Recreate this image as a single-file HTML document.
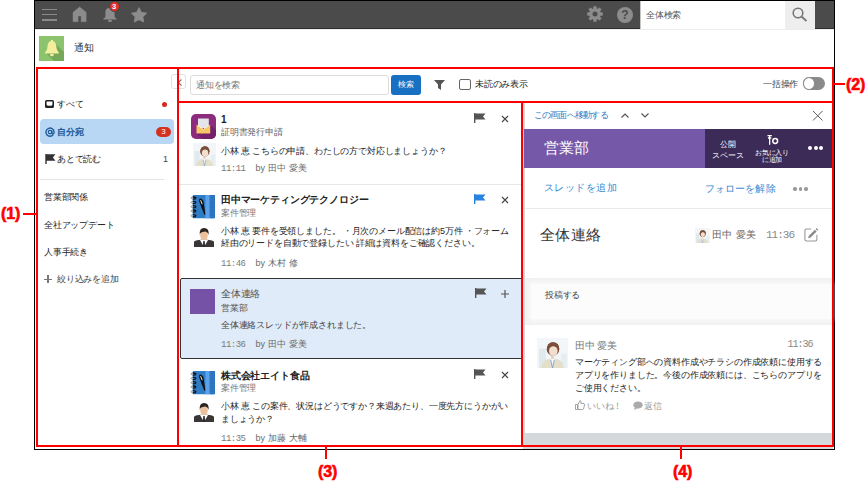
<!DOCTYPE html>
<html><head><meta charset="utf-8">
<style>
*{box-sizing:border-box}
html,body{margin:0;padding:0;width:867px;height:484px;overflow:hidden;background:#fff;font-family:"Liberation Sans",sans-serif;color:#333}
.a{position:absolute}
.t{position:absolute;white-space:nowrap;line-height:12px;font-size:9px;letter-spacing:-0.17px}
.tm{font-family:"Liberation Mono",monospace;font-size:9px;letter-spacing:-0.5px;margin-right:10px;color:#7a7a7a}
.tt{letter-spacing:0.1px}
.r{position:absolute;background:#ff0000}
svg{position:absolute;overflow:visible}
</style></head><body>

<!-- outer frame -->
<div class="a" style="left:34px;top:0;width:801px;height:450px;border:1px solid #000"></div>
<!-- top bar -->
<div class="a" style="left:35px;top:1px;width:799px;height:28px;background:#4b4b4b"></div>
<div class="a" style="left:35px;top:28px;width:799px;height:1px;background:#2f2f2f"></div>
<div class="a" style="left:35px;top:29px;width:799px;height:1px;background:#ececec"></div>

<!-- hamburger -->
<div class="a" style="left:42px;top:8.6px;width:14.5px;height:1.6px;background:#8a8a8a"></div>
<div class="a" style="left:42px;top:13.8px;width:14.5px;height:1.6px;background:#8a8a8a"></div>
<div class="a" style="left:42px;top:19px;width:14.5px;height:1.6px;background:#8a8a8a"></div>
<!-- home -->
<svg style="left:72.7px;top:6.8px" width="13.2" height="15" viewBox="0 0 13.2 15"><path d="M6.6 0 L13.2 5.3 V14.8 H8.1 V9.1 H5.1 V14.8 H0 V5.3Z" fill="#8c8c8c" stroke="#8c8c8c" stroke-width="0.4" stroke-linejoin="round"/></svg>
<!-- bell -->
<svg style="left:102.5px;top:7px" width="14" height="15" viewBox="0 0 14 15"><path d="M7 0.8 C3.2 0.8 2.4 3.2 2.4 6.2 V9.2 Q2.3 10.8 0.3 11.8 V12.6 H13.7 V11.8 Q11.7 10.8 11.6 9.2 V6.2 C11.6 3.2 10.8 0.8 7 0.8Z" fill="#8c8c8c"/><ellipse cx="7" cy="13.9" rx="2" ry="1.1" fill="#8c8c8c"/></svg>
<div class="a" style="left:108.5px;top:0.8px;width:11px;height:11px;border-radius:50%;background:#e0302a;border:0.8px solid #3d4545;color:#fff;font-size:7.5px;line-height:9.5px;text-align:center;font-weight:bold">3</div>
<!-- star -->
<svg style="left:131px;top:6.5px" width="16" height="16" viewBox="0 0 16 16"><path d="M8.00 0.60 L10.41 5.28 L15.61 6.13 L11.90 9.87 L12.70 15.07 L8.00 12.70 L3.30 15.07 L4.10 9.87 L0.39 6.13 L5.59 5.28Z" fill="#8c8c8c" stroke="#8c8c8c" stroke-width="0.8" stroke-linejoin="round"/></svg>
<!-- gear -->
<svg style="left:587.2px;top:6.3px" width="16" height="16" viewBox="-8 -8 16 16"><g fill="#8c8c8c" stroke="#8c8c8c" stroke-width="0.5" stroke-linejoin="round"><circle r="5.4"/><path d="M-1.3 -7.6 H1.3 L1.7 -4 H-1.7Z" transform="rotate(0)"/><path d="M-1.3 -7.6 H1.3 L1.7 -4 H-1.7Z" transform="rotate(45)"/><path d="M-1.3 -7.6 H1.3 L1.7 -4 H-1.7Z" transform="rotate(90)"/><path d="M-1.3 -7.6 H1.3 L1.7 -4 H-1.7Z" transform="rotate(135)"/><path d="M-1.3 -7.6 H1.3 L1.7 -4 H-1.7Z" transform="rotate(180)"/><path d="M-1.3 -7.6 H1.3 L1.7 -4 H-1.7Z" transform="rotate(225)"/><path d="M-1.3 -7.6 H1.3 L1.7 -4 H-1.7Z" transform="rotate(270)"/><path d="M-1.3 -7.6 H1.3 L1.7 -4 H-1.7Z" transform="rotate(315)"/></g><circle r="2.5" fill="#4b4b4b"/></svg>
<!-- help -->
<div class="a" style="left:617px;top:6.5px;width:16px;height:16px;border-radius:50%;background:#8c8c8c;color:#4b4b4b;font-size:12px;line-height:16px;text-align:center;font-weight:bold">?</div>
<!-- global search -->
<div class="a" style="left:640px;top:1px;width:145px;height:28px;background:#fff;border-left:1px solid #c4c4c4"></div>
<div class="t" style="left:646px;top:8.5px;color:#555">全体検索</div>
<div class="a" style="left:785px;top:1px;width:30px;height:28px;background:#eeeeee"></div>
<svg style="left:792px;top:7px" width="16" height="15" viewBox="0 0 16 15"><circle cx="6" cy="6" r="4.8" fill="none" stroke="#777" stroke-width="1.6"/><line x1="9.5" y1="9.5" x2="14.5" y2="14" stroke="#777" stroke-width="1.8"/></svg>

<!-- header -->
<div class="a" style="left:39px;top:36px;width:25px;height:25px;background:#8cc46e;overflow:hidden">
  <svg style="left:0;top:0" width="25" height="25" viewBox="0 0 25 25"><path d="M14 5 L25 16 V25 H15 L7 17 H19.8Z" fill="#76a85c"/><path d="M12.9 3.8 Q14 3.8 14 5.1 Q17.4 6.4 17.4 11.2 Q17.4 15 19.8 16.4 V17.4 H6 V16.4 Q8.4 15 8.4 11.2 Q8.4 6.4 11.8 5.1 Q11.8 3.8 12.9 3.8Z" fill="#f3ee9d"/><ellipse cx="12.9" cy="19" rx="1.9" ry="1.3" fill="#f3ee9d"/></svg>
</div>
<div class="t" style="left:74px;top:42px;font-size:10px;color:#333">通知</div>

<!-- ===== LEFT SIDEBAR ===== -->
<div class="a" style="left:171px;top:74px;width:15px;height:15px;border:1px solid #e2e2e2;border-radius:3px;background:#fff"></div>
<svg style="left:177px;top:79px" width="5" height="7" viewBox="0 0 5 7"><path d="M4.5 0.5 L1.2 3.5 L4.5 6.5" fill="none" stroke="#777" stroke-width="1.1"/></svg>

<!-- inbox icon -->
<svg style="left:45px;top:100px" width="9" height="8" viewBox="0 0 8.7 7.6"><path fill-rule="evenodd" d="M1.5 0 H7.2 Q8.7 0 8.7 1.5 V6.1 Q8.7 7.6 7.2 7.6 H1.5 Q0 7.6 0 6.1 V1.5 Q0 0 1.5 0Z M1.5 1.5 V4.3 Q1.8 5.6 3 5.6 H5.7 Q6.9 5.6 7.2 4.3 V1.5Z" fill="#222"/></svg>
<div class="t" style="left:57px;top:98px;font-size:8.8px;color:#222">すべて</div>
<div class="a" style="left:162px;top:102px;width:5px;height:5px;border-radius:50%;background:#d62a1e"></div>

<div class="a" style="left:40px;top:119px;width:134px;height:25px;background:#b8d7f4;border-radius:4px"></div>
<svg style="left:44.5px;top:127px" width="10" height="10" viewBox="0 0 10 10"><path d="M8.3 7.6 A4.1 4.1 0 1 1 9.1 5 V5.6 Q9.1 6.9 7.9 6.9 Q6.8 6.9 6.8 5.6 V3.4" fill="none" stroke="#1d5a98" stroke-width="1.35"/><circle cx="5" cy="5" r="1.75" fill="none" stroke="#1d5a98" stroke-width="1.25"/></svg>
<div class="t" style="left:57px;top:126px;font-size:8.8px;color:#1a5796;font-weight:bold">自分宛</div>
<div class="a" style="left:156px;top:127px;width:15px;height:10px;border-radius:5px;background:#d3321f;color:#fff;font-size:8px;line-height:10px;text-align:center">3</div>

<svg style="left:45px;top:154px" width="10" height="10" viewBox="0 0 10 10"><path d="M1 0 V10 M1 1 H9 L7 3.5 L9 6 H1" fill="#333" stroke="#333" stroke-width="1.4"/></svg>
<div class="t" style="left:57px;top:153px;font-size:8.8px;color:#222">あとで読む</div>
<div class="t" style="left:163px;top:153px;font-size:9px;color:#444">1</div>

<div class="a" style="left:40px;top:179px;width:124px;height:1px;background:#e4e4e4"></div>
<div class="t" style="left:44px;top:191px;color:#222">営業部関係</div>
<div class="t" style="left:44px;top:219px;color:#222">全社アップデート</div>
<div class="t" style="left:44px;top:246px;color:#222">人事手続き</div>
<div class="a" style="left:44px;top:278.5px;width:8px;height:1.2px;background:#777"></div>
<div class="a" style="left:47.4px;top:275px;width:1.2px;height:8px;background:#777"></div>
<div class="t" style="left:57px;top:273px;color:#444">絞り込みを追加</div>

<!-- ===== TOOLBAR ===== -->
<div class="a" style="left:190px;top:75px;width:199px;height:20px;border:1px solid #dcdcdc;border-radius:3px;background:#fff"></div>
<div class="t" style="left:196px;top:79px;color:#777">通知を検索</div>
<div class="a" style="left:391px;top:75px;width:30px;height:20px;border-radius:3px;background:#1770c2;color:#fff;font-size:7.5px;line-height:20px;text-align:center">検索</div>
<svg style="left:434px;top:80px" width="11" height="10" viewBox="0 0 11 10"><path d="M0 0 H11 L7 4.5 V10 L4 8 V4.5Z" fill="#555"/></svg>
<div class="a" style="left:459px;top:79px;width:12px;height:11px;border:1.3px solid #666;border-radius:2px;background:#fff"></div>
<div class="t" style="left:475px;top:78px;color:#222">未読のみ表示</div>
<div class="t" style="left:763px;top:78px;color:#444">一括操作</div>
<div class="a" style="left:802.5px;top:77px;width:22.5px;height:13px;border-radius:6.5px;background:#8a8a8a"></div>
<div class="a" style="left:802.5px;top:77px;width:12.5px;height:13px;border-radius:50%;background:#fff;border:1.2px solid #8a8a8a"></div>

<!-- ===== LIST ===== -->
<!-- item1 -->
<div class="a" style="left:190.5px;top:113.5px;width:25px;height:25px;border-radius:5px;background:#8d2b7e;overflow:hidden">
  <svg style="left:0;top:0" width="25" height="25" viewBox="0 0 25 25"><path d="M19.2 10.5 L35 26 L24 37 L5.5 19.5 Z" fill="#74206a"/><rect x="7" y="4.5" width="10.8" height="9.5" fill="#e3e5ea"/><path d="M5.5 10.5 L12.35 15.3 L19.2 10.5 V19.5 H5.5Z" fill="#f7c766"/><path d="M7 11.5 L12.35 15.3 L17.7 11.5" fill="none" stroke="#fff" stroke-width="0.7"/></svg>
</div>
<div class="t" style="left:221px;top:114px;font-size:10px;font-weight:bold;color:#222">1</div>
<div class="t" style="left:221px;top:126px;color:#666">証明書発行申請</div>
<svg style="left:193px;top:143px" width="23" height="23" viewBox="0 0 31 31"><path d="M0 0H31V31H0Z" fill="#f2f6f8"/><rect x="2" y="11" width="7" height="20" fill="#e0e9ee"/><rect x="24" y="16" width="6" height="15" fill="#e6eef2"/><path d="M4 31 Q5 23 12 21.5 H19 Q26 23 27 31Z" fill="#e4dfc8"/><path d="M12.5 21.5 L15.5 31 L18.5 21.5Z" fill="#f5f7f9"/><path d="M13.6 22.5 L15.5 31 L17.4 22.5" fill="none" stroke="#7d9cc2" stroke-width="0.9"/><rect x="14" y="17.5" width="3" height="4" fill="#ecd0bc"/><ellipse cx="16" cy="11.3" rx="6.3" ry="6.9" fill="#7a4e3a"/><ellipse cx="16.3" cy="13.4" rx="4.3" ry="5.1" fill="#f3ddcd"/><path d="M9.8 13 Q10 4.5 16 4.5 Q22.2 4.5 22.3 12 Q20 8 15 8.6 Q12 9.4 9.8 13Z" fill="#7a4e3a"/></svg>
<div class="t" style="left:221px;top:145px;color:#1e1e1e">小林 恵 こちらの申請、わたしの方で対応しましょうか？</div>
<div class="t tt" style="left:221px;top:162px;color:#6a6a6a"><span class="tm">11:11</span>by 田中 愛美</div>
<svg style="left:474px;top:113px" width="12" height="10" viewBox="0 0 12 10"><path d="M0.7 0 V10" stroke="#555" stroke-width="1.4"/><path d="M0.7 0.5 H11.5 L9 3.5 L11.5 6.5 H0.7Z" fill="#555"/></svg>
<svg style="left:502px;top:115.5px" width="6" height="6" viewBox="0 0 6 6"><path d="M0 0 L6 6 M6 0 L0 6" stroke="#444" stroke-width="1.1"/></svg>
<div class="a" style="left:179px;top:184px;width:342px;height:1px;background:#e6e6e6"></div>

<!-- item2 -->
<div class="a" style="left:190px;top:194px;width:26px;height:25px;overflow:hidden">
  <svg style="left:0;top:0" width="26" height="25" viewBox="0 0 26 25"><rect x="2.6" y="1" width="22.4" height="23.3" rx="1" fill="#2f7cc6"/><rect x="15.4" y="1" width="4.3" height="23.3" fill="#5aa2ee"/><rect x="19.7" y="1" width="5.3" height="23.3" rx="0.8" fill="#2b72bc"/><path d="M20.8 2 V23.5 M23.3 2 V23.5" stroke="#4a90dc" stroke-width="0.5" stroke-dasharray="1 1"/><path d="M9.8 4.4 Q12.6 4.2 13.6 8 L15.4 20.4 L14.2 20.8 L9.2 7.4 Q8.8 5 9.8 4.4Z" fill="#111"/><path d="M10.6 6.2 L12.2 10.2" stroke="#fff" stroke-width="0.9"/><path d="M3.5 2.9999999999999996 Q0.6 2.9999999999999996 0.9 4.1 Q1.2 5.199999999999999 3.5 5.199999999999999" fill="none" stroke="#888" stroke-width="0.9"/><path d="M3 2.9999999999999996 Q5.8 3.1999999999999997 5.8 4.1 Q5.6 5.199999999999999 3 5.199999999999999" fill="none" stroke="#111" stroke-width="1.3"/><path d="M3.5 7.4 Q0.6 7.4 0.9 8.5 Q1.2 9.6 3.5 9.6" fill="none" stroke="#888" stroke-width="0.9"/><path d="M3 7.4 Q5.8 7.6 5.8 8.5 Q5.6 9.6 3 9.6" fill="none" stroke="#111" stroke-width="1.3"/><path d="M3.5 11.700000000000001 Q0.6 11.700000000000001 0.9 12.8 Q1.2 13.9 3.5 13.9" fill="none" stroke="#888" stroke-width="0.9"/><path d="M3 11.700000000000001 Q5.8 11.9 5.8 12.8 Q5.6 13.9 3 13.9" fill="none" stroke="#111" stroke-width="1.3"/><path d="M3.5 16.0 Q0.6 16.0 0.9 17.1 Q1.2 18.200000000000003 3.5 18.200000000000003" fill="none" stroke="#888" stroke-width="0.9"/><path d="M3 16.0 Q5.8 16.200000000000003 5.8 17.1 Q5.6 18.200000000000003 3 18.200000000000003" fill="none" stroke="#111" stroke-width="1.3"/><path d="M3.5 20.7 Q0.6 20.7 0.9 21.8 Q1.2 22.900000000000002 3.5 22.900000000000002" fill="none" stroke="#888" stroke-width="0.9"/><path d="M3 20.7 Q5.8 20.900000000000002 5.8 21.8 Q5.6 22.900000000000002 3 22.900000000000002" fill="none" stroke="#111" stroke-width="1.3"/></svg>
</div>
<div class="t" style="left:221px;top:194px;font-size:10px;font-weight:bold;color:#222">田中マーケティングテクノロジー</div>
<div class="t" style="left:221px;top:206.5px;color:#777">案件管理</div>
<div class="a" style="left:193px;top:227px;width:22px;height:20px;overflow:hidden">
  <svg style="left:0;top:0" width="22" height="20" viewBox="0 0 22 20"><path d="M1 20 V15 Q1 13.6 4 13.2 L8 12.7 H14 L18 13.2 Q21 13.6 21 15 V20Z" fill="#3a3636"/><path d="M7 13 L11 20 L15 13Z" fill="#fff"/><path d="M10.3 14 H11.7 L12.2 20 H9.8Z" fill="#2c2c34"/><ellipse cx="11" cy="8.5" rx="3.8" ry="4.8" fill="#edc09c"/><path d="M6.8 8 Q6 1 11 1 Q16.5 1 15.5 8 Q15 5 12.5 4.5 Q9 4.5 7.5 6Z" fill="#2a2522"/></svg>
</div>
<div class="t" style="left:221px;top:225px;color:#1e1e1e">小林 恵 要件を受領しました。 ・月次のメール配信は約5万件 ・フォーム</div>
<div class="t" style="left:221px;top:237px;color:#1e1e1e">経由のリードを自動で登録したい 詳細は資料をご確認ください。</div>
<div class="t tt" style="left:221px;top:256.5px;color:#6a6a6a"><span class="tm">11:46</span>by 木村 修</div>
<svg style="left:474px;top:194px" width="12" height="10" viewBox="0 0 12 10"><path d="M0.7 0 V10" stroke="#2b83e0" stroke-width="1.4"/><path d="M0.7 0.5 H11.5 L9 3.5 L11.5 6.5 H0.7Z" fill="#2b83e0"/></svg>
<svg style="left:502px;top:196.5px" width="6" height="6" viewBox="0 0 6 6"><path d="M0 0 L6 6 M6 0 L0 6" stroke="#444" stroke-width="1.1"/></svg>

<!-- item3 selected -->
<div class="a" style="left:180px;top:278px;width:344px;height:81px;border:1px solid #333;border-radius:2px;background:#dfebf8"></div>
<div class="a" style="left:190px;top:289px;width:25px;height:25px;background:#7552a6"></div>
<div class="t" style="left:221px;top:287.5px;font-size:10px;color:#555">全体連絡</div>
<div class="t" style="left:221px;top:302px;color:#555">営業部</div>
<div class="t" style="left:221px;top:319px;color:#444">全体連絡スレッドが作成されました。</div>
<div class="t tt" style="left:221px;top:337.5px;color:#6a6a6a"><span class="tm">11:36</span>by 田中 愛美</div>
<svg style="left:475px;top:288px" width="12" height="10" viewBox="0 0 12 10"><path d="M0.7 0 V10" stroke="#555" stroke-width="1.4"/><path d="M0.7 0.5 H11.5 L9 3.5 L11.5 6.5 H0.7Z" fill="#555"/></svg>
<svg style="left:501px;top:289.5px" width="8" height="8" viewBox="0 0 8 8"><path d="M4 0 V8 M0 4 H8" stroke="#555" stroke-width="1.2"/></svg>

<!-- item4 -->
<div class="a" style="left:190px;top:370px;width:26px;height:25px;overflow:hidden">
  <svg style="left:0;top:0" width="26" height="25" viewBox="0 0 26 25"><rect x="2.6" y="1" width="22.4" height="23.3" rx="1" fill="#2f7cc6"/><rect x="15.4" y="1" width="4.3" height="23.3" fill="#5aa2ee"/><rect x="19.7" y="1" width="5.3" height="23.3" rx="0.8" fill="#2b72bc"/><path d="M20.8 2 V23.5 M23.3 2 V23.5" stroke="#4a90dc" stroke-width="0.5" stroke-dasharray="1 1"/><path d="M9.8 4.4 Q12.6 4.2 13.6 8 L15.4 20.4 L14.2 20.8 L9.2 7.4 Q8.8 5 9.8 4.4Z" fill="#111"/><path d="M10.6 6.2 L12.2 10.2" stroke="#fff" stroke-width="0.9"/><path d="M3.5 2.9999999999999996 Q0.6 2.9999999999999996 0.9 4.1 Q1.2 5.199999999999999 3.5 5.199999999999999" fill="none" stroke="#888" stroke-width="0.9"/><path d="M3 2.9999999999999996 Q5.8 3.1999999999999997 5.8 4.1 Q5.6 5.199999999999999 3 5.199999999999999" fill="none" stroke="#111" stroke-width="1.3"/><path d="M3.5 7.4 Q0.6 7.4 0.9 8.5 Q1.2 9.6 3.5 9.6" fill="none" stroke="#888" stroke-width="0.9"/><path d="M3 7.4 Q5.8 7.6 5.8 8.5 Q5.6 9.6 3 9.6" fill="none" stroke="#111" stroke-width="1.3"/><path d="M3.5 11.700000000000001 Q0.6 11.700000000000001 0.9 12.8 Q1.2 13.9 3.5 13.9" fill="none" stroke="#888" stroke-width="0.9"/><path d="M3 11.700000000000001 Q5.8 11.9 5.8 12.8 Q5.6 13.9 3 13.9" fill="none" stroke="#111" stroke-width="1.3"/><path d="M3.5 16.0 Q0.6 16.0 0.9 17.1 Q1.2 18.200000000000003 3.5 18.200000000000003" fill="none" stroke="#888" stroke-width="0.9"/><path d="M3 16.0 Q5.8 16.200000000000003 5.8 17.1 Q5.6 18.200000000000003 3 18.200000000000003" fill="none" stroke="#111" stroke-width="1.3"/><path d="M3.5 20.7 Q0.6 20.7 0.9 21.8 Q1.2 22.900000000000002 3.5 22.900000000000002" fill="none" stroke="#888" stroke-width="0.9"/><path d="M3 20.7 Q5.8 20.900000000000002 5.8 21.8 Q5.6 22.900000000000002 3 22.900000000000002" fill="none" stroke="#111" stroke-width="1.3"/></svg>
</div>
<div class="t" style="left:221px;top:370px;font-size:10px;font-weight:bold;color:#222">株式会社エイト食品</div>
<div class="t" style="left:221px;top:382px;color:#777">案件管理</div>
<div class="a" style="left:193px;top:402px;width:22px;height:20px;overflow:hidden">
  <svg style="left:0;top:0" width="22" height="20" viewBox="0 0 22 20"><path d="M1 20 V15 Q1 13.6 4 13.2 L8 12.7 H14 L18 13.2 Q21 13.6 21 15 V20Z" fill="#3a3636"/><path d="M7 13 L11 20 L15 13Z" fill="#fff"/><path d="M10.3 14 H11.7 L12.2 20 H9.8Z" fill="#2c2c34"/><ellipse cx="11" cy="8.5" rx="3.8" ry="4.8" fill="#edc09c"/><path d="M6.8 8 Q6 1 11 1 Q16.5 1 15.5 8 Q15 5 12.5 4.5 Q9 4.5 7.5 6Z" fill="#2a2522"/></svg>
</div>
<div class="t" style="left:221px;top:400px;color:#1e1e1e">小林 恵 この案件、状況はどうですか？来週あたり、一度先方にうかがい</div>
<div class="t" style="left:221px;top:413px;color:#1e1e1e">ましょうか？</div>
<div class="t tt" style="left:221px;top:431.5px;color:#6a6a6a"><span class="tm">11:35</span>by 加藤 大輔</div>
<svg style="left:474px;top:369px" width="12" height="10" viewBox="0 0 12 10"><path d="M0.7 0 V10" stroke="#555" stroke-width="1.4"/><path d="M0.7 0.5 H11.5 L9 3.5 L11.5 6.5 H0.7Z" fill="#555"/></svg>
<svg style="left:502px;top:371.5px" width="6" height="6" viewBox="0 0 6 6"><path d="M0 0 L6 6 M6 0 L0 6" stroke="#444" stroke-width="1.1"/></svg>

<!-- ===== RIGHT PANEL ===== -->
<div class="a" style="left:523px;top:103px;width:310px;height:346px;background:#d4d8da"></div>
<div class="a" style="left:525px;top:103px;width:308px;height:26px;background:#fff"></div>
<div class="t" style="left:533.5px;top:109px;letter-spacing:-0.75px;color:#2a7cc6">この画面へ移動する</div>
<svg style="left:621px;top:112.5px" width="8" height="5" viewBox="0 0 8 5"><path d="M0.5 4.5 L4 1 L7.5 4.5" fill="none" stroke="#555" stroke-width="1.2"/></svg>
<svg style="left:641px;top:112.5px" width="8" height="5" viewBox="0 0 8 5"><path d="M0.5 0.5 L4 4 L7.5 0.5" fill="none" stroke="#555" stroke-width="1.2"/></svg>
<svg style="left:812.5px;top:111px" width="9.5" height="9.5" viewBox="0 0 10 10"><path d="M0 0 L10 10 M10 0 L0 10" stroke="#555" stroke-width="1"/></svg>

<div class="a" style="left:524px;top:129px;width:309px;height:39px;background:#7658a8"></div>
<div class="a" style="left:705px;top:129px;width:128px;height:39px;background:#3d2b57"></div>
<div class="t" style="left:544px;top:139px;font-size:15px;line-height:18px;color:#fff">営業部</div>
<div class="t" style="left:708px;top:139px;width:40px;text-align:center;font-size:7.5px;line-height:11px;color:#fff">公開<br>スペース</div>
<svg style="left:767px;top:135px" width="12" height="10" viewBox="0 0 12 10"><path d="M0.5 0.7 H4.8 M1 3 H4.3 M2.65 0.7 V9.8" stroke="#fff" stroke-width="1.3"/><circle cx="8.2" cy="6" r="2.4" fill="none" stroke="#fff" stroke-width="1.5"/></svg>
<div class="t" style="left:752px;top:148.5px;width:40px;text-align:center;font-size:7px;line-height:7.5px;letter-spacing:-0.1px;color:#fff">お気に入り<br>に追加</div>
<div class="a" style="left:808px;top:146px;width:4px;height:4px;border-radius:50%;background:#fff"></div>
<div class="a" style="left:813.5px;top:146px;width:4px;height:4px;border-radius:50%;background:#fff"></div>
<div class="a" style="left:819px;top:146px;width:4px;height:4px;border-radius:50%;background:#fff"></div>

<div class="a" style="left:525px;top:168px;width:308px;height:40px;background:#fff"></div>
<div class="t" style="left:543.5px;top:182px;font-size:10px;letter-spacing:0.5px;color:#3a8bd2">スレッドを追加</div>
<div class="t" style="left:705px;top:182.5px;font-size:10px;letter-spacing:0.1px;color:#3a8bd2">フォローを解除</div>
<div class="a" style="left:793px;top:187px;width:3.5px;height:3.5px;border-radius:50%;background:#999"></div>
<div class="a" style="left:798.5px;top:187px;width:3.5px;height:3.5px;border-radius:50%;background:#999"></div>
<div class="a" style="left:804px;top:187px;width:3.5px;height:3.5px;border-radius:50%;background:#999"></div>
<div class="a" style="left:525px;top:208px;width:308px;height:1px;background:#e8ecef"></div>

<div class="a" style="left:525px;top:209px;width:308px;height:69px;background:#fff"></div>
<div class="t" style="left:539.5px;top:226px;font-size:15px;line-height:18px;letter-spacing:0.6px;color:#333">全体連絡</div>
<svg style="left:695px;top:228px" width="15" height="15" viewBox="0 0 31 31"><path d="M0 0H31V31H0Z" fill="#f2f6f8"/><rect x="2" y="11" width="7" height="20" fill="#e0e9ee"/><rect x="24" y="16" width="6" height="15" fill="#e6eef2"/><path d="M4 31 Q5 23 12 21.5 H19 Q26 23 27 31Z" fill="#e4dfc8"/><path d="M12.5 21.5 L15.5 31 L18.5 21.5Z" fill="#f5f7f9"/><path d="M13.6 22.5 L15.5 31 L17.4 22.5" fill="none" stroke="#7d9cc2" stroke-width="0.9"/><rect x="14" y="17.5" width="3" height="4" fill="#ecd0bc"/><ellipse cx="16" cy="11.3" rx="6.3" ry="6.9" fill="#7a4e3a"/><ellipse cx="16.3" cy="13.4" rx="4.3" ry="5.1" fill="#f3ddcd"/><path d="M9.8 13 Q10 4.5 16 4.5 Q22.2 4.5 22.3 12 Q20 8 15 8.6 Q12 9.4 9.8 13Z" fill="#7a4e3a"/></svg>
<div class="t" style="left:712px;top:229px;font-size:10px;letter-spacing:0.4px;color:#666">田中 愛美</div>
<div class="t" style="left:766px;top:229px;font-family:'Liberation Mono',monospace;font-size:11px;letter-spacing:-1px;color:#888">11:36</div>
<svg style="left:804px;top:228px" width="15" height="15" viewBox="0 0 15 15"><path d="M7.2 1 H2.6 Q0.9 1 0.9 2.7 V11.3 Q0.9 13 2.6 13 H11.2 Q12.9 13 12.9 11.3 V6.8" fill="none" stroke="#999" stroke-width="1.1"/><path d="M4 10.2 L4.9 7.7 L10.9 1.7 L12.6 3.4 L6.6 9.4Z" fill="#8a8a8a"/><path d="M11.6 1 L12.6 0 L14.3 1.7 L13.3 2.7Z" fill="#8a8a8a"/></svg>

<div class="a" style="left:525px;top:278px;width:308px;height:47px;background:#f1f1f1"></div>
<div class="a" style="left:531px;top:284px;width:300px;height:35px;background:#fcfcfc;box-shadow:0 0 5px 2px #fafafa"></div>
<div class="t" style="left:545px;top:289px;color:#444">投稿する</div>

<div class="a" style="left:525px;top:325px;width:308px;height:108px;background:#fff"></div>
<svg style="left:537px;top:338px" width="31" height="30" viewBox="0 0 31 31" preserveAspectRatio="none"><path d="M0 0H31V31H0Z" fill="#f2f6f8"/><rect x="2" y="11" width="7" height="20" fill="#e0e9ee"/><rect x="24" y="16" width="6" height="15" fill="#e6eef2"/><path d="M4 31 Q5 23 12 21.5 H19 Q26 23 27 31Z" fill="#e4dfc8"/><path d="M12.5 21.5 L15.5 31 L18.5 21.5Z" fill="#f5f7f9"/><path d="M13.6 22.5 L15.5 31 L17.4 22.5" fill="none" stroke="#7d9cc2" stroke-width="0.9"/><rect x="14" y="17.5" width="3" height="4" fill="#ecd0bc"/><ellipse cx="16" cy="11.3" rx="6.3" ry="6.9" fill="#7a4e3a"/><ellipse cx="16.3" cy="13.4" rx="4.3" ry="5.1" fill="#f3ddcd"/><path d="M9.8 13 Q10 4.5 16 4.5 Q22.2 4.5 22.3 12 Q20 8 15 8.6 Q12 9.4 9.8 13Z" fill="#7a4e3a"/></svg>
<div class="t" style="left:575px;top:339.5px;font-size:10px;color:#777">田中 愛美</div>
<div class="t" style="left:787.5px;top:339px;font-family:'Liberation Mono',monospace;font-size:10px;letter-spacing:-1px;color:#888">11:36</div>
<div class="t" style="left:575px;top:355.5px;line-height:13px;color:#1e1e1e">マーケティング部への資料作成やチラシの作成依頼に使用する<br>アプリを作りました。今後の作成依頼には、こちらのアプリを<br>ご使用ください。</div>
<svg style="left:575px;top:400px" width="10" height="10" viewBox="0 0 10 10"><path d="M0.5 4.5 H2.5 V9.5 H0.5Z M3 4.5 L5 0.5 Q6.5 0.5 6 3.5 H9 Q9.8 3.8 9.5 5 L8.5 9 Q8.2 9.5 7.5 9.5 H3Z" fill="none" stroke="#999" stroke-width="0.9"/></svg>
<div class="t" style="left:587px;top:399.5px;color:#999">いいね！</div>
<svg style="left:633px;top:401px" width="10" height="9" viewBox="0 0 10 9"><ellipse cx="5" cy="4" rx="4.8" ry="3.5" fill="#aaa"/><path d="M2 6 L1 9 L5 7Z" fill="#aaa"/></svg>
<div class="t" style="left:644px;top:399.5px;color:#999">返信</div>

<!-- ===== RED ANNOTATIONS ===== -->
<div class="r" style="left:36px;top:67px;width:797px;height:2px"></div>
<div class="r" style="left:36px;top:67px;width:2px;height:380px"></div>
<div class="r" style="left:36px;top:445px;width:797px;height:2px"></div>
<div class="r" style="left:832px;top:67px;width:2px;height:380px"></div>
<div class="r" style="left:177px;top:67px;width:2px;height:380px"></div>
<div class="r" style="left:177px;top:101px;width:656px;height:2px"></div>
<div class="r" style="left:521px;top:101px;width:2px;height:346px"></div>
<!-- leaders -->
<div class="r" style="left:23px;top:213px;width:13px;height:2px"></div>
<div class="r" style="left:834px;top:83px;width:11px;height:2px"></div>
<div class="r" style="left:325px;top:447px;width:2px;height:12px"></div>
<div class="r" style="left:680px;top:447px;width:2px;height:12px"></div>
<div class="t" style="left:1px;top:204px;font-size:16px;line-height:19px;font-weight:bold;color:#f00;-webkit-text-stroke:0.6px #f00">(1)</div>
<div class="t" style="left:846px;top:74.5px;font-size:16px;line-height:19px;font-weight:bold;color:#f00;-webkit-text-stroke:0.6px #f00">(2)</div>
<div class="t" style="left:318px;top:462px;font-size:16px;line-height:19px;font-weight:bold;color:#f00;-webkit-text-stroke:0.6px #f00">(3)</div>
<div class="t" style="left:673px;top:462px;font-size:16px;line-height:19px;font-weight:bold;color:#f00;-webkit-text-stroke:0.6px #f00">(4)</div>

</body></html>
